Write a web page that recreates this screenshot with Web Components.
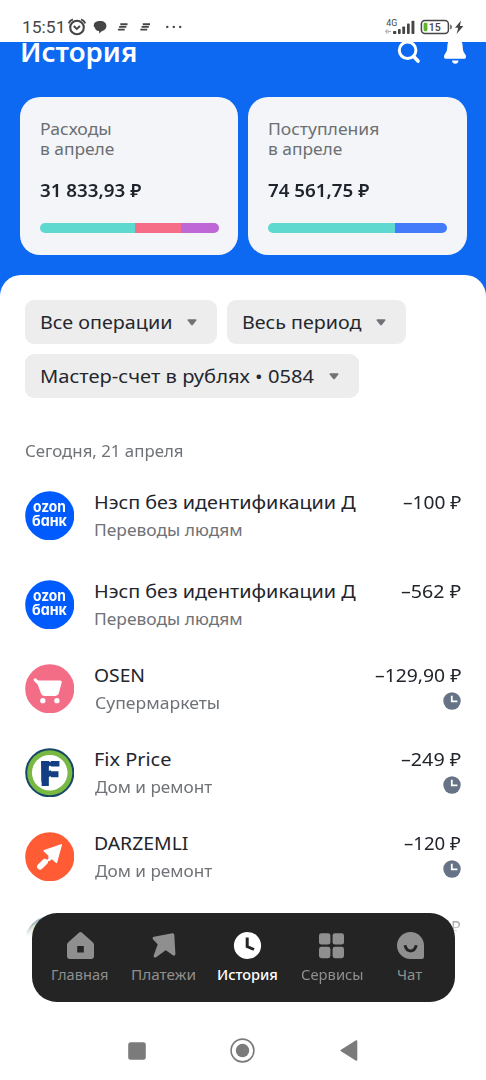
<!DOCTYPE html>
<html lang="ru">
<head>
<meta charset="utf-8">
<title>История</title>
<style>
html,body{margin:0;padding:0;background:#fff}
body{width:486px;height:1080px;overflow:hidden;font-family:"Noto Sans",sans-serif}
</style>
</head>
<body>
<bank-screen></bank-screen>
<script>
const make=(name,html,setup)=>customElements.define(name,class extends HTMLElement{
  connectedCallback(){
    if(this.shadowRoot)return;
    const t=document.createElement('template');
    t.innerHTML=typeof html==='function'?html(this):html;
    this.attachShadow({mode:'open'}).append(t.content.cloneNode(true));
    if(setup)setup(this);
  }
});

const icons={
  home:`<path fill="currentColor" fill-rule="evenodd" d="M11.6.9q1.9-1.8 3.8 0l10.3 9.3q1.3 1.2 1.3 2.6V24.600q0 2.400-2.400 2.400H2.400Q0 27 0 24.600V12.800q0-1.400 1.300-2.600zM10.200 14v6.600h6.600V14z"/>`,
  pay:`<path fill="currentColor" stroke="currentColor" stroke-width="3.200" stroke-linejoin="round" d="M22.700 2.800 4.200 6.300 9.500 12 5.200 24 15.700 16.300 23.800 22z"/>`,
  clock:`<circle cx="13.500" cy="13.500" r="13.600" fill="currentColor"/><path d="M13.200 5.500v9l6.800 3" fill="none" stroke="#242424" stroke-width="3"/>`,
  grid:`<g fill="currentColor"><rect x="1" y="1.200" width="11.400" height="11.400" rx="2.400"/><rect x="14.600" y="1.200" width="11.400" height="11.400" rx="2.400"/><rect x="1" y="14.800" width="11.400" height="11.400" rx="2.400"/><rect x="14.600" y="14.800" width="11.400" height="11.400" rx="2.400"/></g>`,
  chat:`<path fill="currentColor" d="M13.500 0A13.500 13.500 0 0 1 27 13.500V24.800Q27 27 24.800 27H13.500a13.500 13.500 0 0 1 0-27z"/><path d="M8 13.300q1.200 5.600 5.600 5.600t5.600-5.600" fill="none" stroke="#242424" stroke-width="3"/>`
};
const avatars={
  cart:`<circle cx="25" cy="25" r="24.800" fill="#f46d86"/><path d="M10.300 16l2.600 2.500" stroke="#fff" stroke-width="3.200" stroke-linecap="round"/><path fill="#fff" d="M11.300 16.600h23.800q2.500 0 1.900 2.400l-2.800 10.500q-.8 2.700-3.500 2.700H19.500q-2.600 0-3.300-2.500z"/><circle cx="18" cy="37" r="2.700" fill="#fff"/><circle cx="32.200" cy="37" r="2.700" fill="#fff"/>`,
  fix:`<circle cx="25" cy="25" r="24.800" fill="#164866"/><circle cx="25" cy="25" r="22.800" fill="#78b843"/><circle cx="25" cy="25" r="18" fill="#fff"/><path fill="#133e83" d="M16.200 13.200h7.900l1.200 1.200 1.200-1.200h8.300v5.600h-8.300l-1.200-1.200-1.200 1.200v4.700l1.200-1.200 1.200 1.200h7.300v6h-7.300l-1.200-1.200-1.200 1.200v9h-7.300v-4.300h-.4z"/>`,
  trowel:`<circle cx="25" cy="25" r="24.800" fill="#ff5c36"/><path fill="#fff" d="M36.300 12.300q1.400-.3 1 1.100l-4.800 17.400q-.4 1.200-1.400.3l-4-3.700-2.400 2.200-1.600-1.600 2.200-2.400-6.300-5.900q-.9-1 .3-1.400z"/><path d="M24.600 24.200v3.200l-3 2.700" stroke="#fff" stroke-width="2" fill="none"/><path d="M15.200 35l4.900-4.800" stroke="#fff" stroke-width="6" stroke-linecap="round"/>`,
  ozon:`<circle cx="25" cy="25" r="24.800" fill="#005bff"/>`
};

make('status-bar',`<style>
:host{display:flex;height:42px;box-sizing:border-box;padding:13px 22px 0 23px;color:#454545;font:16.500px/28px Roboto,sans-serif}
.t{width:44px;margin-top:1px}.i{width:120px}.s{margin-left:auto;width:80px}svg{display:block}
</style><div class="t"><fit-text w="39">15:51</fit-text></div>
<svg class="i" width="120" height="28" viewBox="67 13 120 28" fill="none" stroke="#454545">
<circle cx="77" cy="27.500" r="6.800" stroke-width="2.100"/><path d="M73.800 26l3 3 3.200-3" stroke-width="1.900"/><path d="M68.700 23.300q1-2.700 4.200-3.900M81.100 19.400q3 1 4.200 3.900" stroke-width="2"/>
<path d="M100.300 20.900c3.800 0 6.100 2 6.100 5 0 2.800-2 4.500-4.400 5l-2.600 2.700-.4-2.500c-2.500-.3-3.900-1.700-4-3.400-1.300-.6-1.700-2-1-3.100 0-2.500 2.600-3.700 6.300-3.700z" fill="#454545" stroke="none"/>
<g stroke-width="1.900"><path d="M120.300 24.200h7.200M119.100 26.900h7.200M117.900 29.600h6.800"/><path d="M142.800 24.200h7.200M141.600 26.900h7.200M140.400 29.600h6.800"/></g>
<g fill="#454545" stroke="none"><circle cx="167.300" cy="26.900" r="1.200"/><circle cx="173.800" cy="26.900" r="1.200"/><circle cx="180.200" cy="26.900" r="1.200"/></g></svg>
<svg class="s" width="80" height="28" viewBox="384 13 80 28">
<text x="386.300" y="26" font-size="8.600" fill="#454545" textLength="11" lengthAdjust="spacingAndGlyphs">4G</text>
<path d="M385 31.500h1.700m-.3-2v4M388 29.500v4m0-2h3" stroke="#a0a0a0" stroke-width=".8"/>
<g fill="#454545"><rect x="393" y="31" width="3.300" height="3" rx=".8"/><rect x="398" y="29" width="2.700" height="5" rx=".8"/><rect x="402.300" y="26.500" width="2.800" height="7.500" rx=".8"/><rect x="407" y="23.500" width="2.700" height="10.500" rx=".8"/><rect x="411.500" y="20.800" width="2.900" height="13.200" rx=".8"/></g>
<rect x="421.400" y="20.500" width="27" height="13" rx="3.500" fill="none" stroke="#454545" stroke-width="1.500"/><path d="M450.300 24.500q1.500.2 1.500 2.500t-1.500 2.500z" fill="#454545"/>
<rect x="423.600" y="22.700" width="3.800" height="8.600" rx="1.300" fill="#60b32b"/>
<text x="428.800" y="31" font-size="11" font-weight="500" fill="#454545" textLength="12" lengthAdjust="spacingAndGlyphs">15</text>
<path d="M461 20.500l-6 7.300h3.200l-1.600 6.200 6.800-8h-3.500z" fill="#454545"/></svg>`);

make('page-title',`<style>
:host{display:flex;height:55px;overflow:hidden;padding:0 19.500px 0 21.500px;box-sizing:border-box;color:#fff;justify-content:space-between;align-items:flex-start;width:486px}
h1{margin:-9.700px 0 0;font:600 26.500px/40px "Noto Sans",sans-serif}
svg{display:block;flex:none}
</style><h1><fit-text w="113.500"><slot></slot></fit-text></h1>
<svg width="70" height="24" viewBox="396 42 70 24"><circle cx="406.600" cy="50.300" r="8.300" fill="none" stroke="#fff" stroke-width="3"/><path d="M412.700 56.500l4.300 4.600" stroke="#fff" stroke-width="3.600" stroke-linecap="round"/>
<path d="M454 38c5 0 7.500 3 7.700 8.500.1 4.500.8 5.300 2.800 8.300.9 1.700.6 4-1.600 4h-17.800c-2.200 0-2.500-2.300-1.600-4 2-3 2.700-3.800 2.800-8.300.2-5.500 2.700-8.500 7.700-8.500z" fill="#fff"/><path d="M451 60.500h6.500q-.3 3.200-3.200 3.200t-3.300-3.200z" fill="#fff"/></svg>`);

make('summary-card',e=>`<style>
:host{display:block;box-sizing:border-box;height:158px;border-radius:20px;background:#f3f5f8;padding:22.500px 19.500px 0 20px;width:218.400px;color:#6c6f73}
.l{font-size:16.500px;line-height:19.500px;height:19.500px;padding-left:.5px}
.l:first-of-type{margin-top:-.5px;height:20px}
.a{font-size:18.700px;font-weight:600;line-height:24px;margin-top:19.500px;height:24px;color:#1f232b}
.b{display:flex;height:10px;border-radius:5px;overflow:hidden;margin-top:20.500px}
.b i{display:block}
</style><div class="l"><fit-text w="${e.getAttribute('lw')}">${e.getAttribute('label')}</fit-text></div><div class="l"><fit-text w="73.300">в апреле</fit-text></div>
<div class="a"><fit-text w="101.200">${e.getAttribute('amount')}</fit-text></div>
<div class="b">${e.getAttribute('bars').split(',').map(s=>{const[c,w]=s.split(' ');return`<i style="background:${c};flex:${w}"></i>`}).join('')}</div>`);

make('filter-chip',e=>`<style>
:host{display:flex;align-items:center;box-sizing:border-box;height:44px;border-radius:9px;background:#ededed;padding:0 20px 0 15.600px;justify-content:space-between;color:#24272e;font-size:18.800px;line-height:43px}
svg{display:block;margin-top:1px}
</style><fit-text w="${e.getAttribute('w')}"><slot></slot></fit-text><svg width="10" height="7" viewBox="0 0 10 7"><path d="M1.200.2h7.600q1.200.2.500 1.400L6 5.700q-1 1-2 0L.700 1.600Q0 .4 1.200.2z" fill="#6f7276"/></svg>`);

make('round-logo',e=>{const k=e.getAttribute('kind');return`<style>
:host{display:grid;width:49.500px;height:49.500px;flex:none}
svg,div{grid-area:1/1;display:block}
div{color:#fff;font:700 14.800px/13.700px Inter,sans-serif;font-feature-settings:"cv11";padding-top:10.300px;text-align:left}
p{margin:0;height:13.700px;padding-left:8.300px}p+p{padding-left:7.300px}
</style><svg viewBox="0 0 50 50" width="49.500" height="49.500" fill="none">${avatars[k]}</svg>${k==='ozon'?'<div><p><fit-text w="32.700">ozon</fit-text></p><p><fit-text w="34.500">банк</fit-text></p></div>':''}`});

make('operation-row',e=>{const g=n=>e.getAttribute(n);return`<style>
:host{display:flex;align-items:center;height:54px;padding-left:24.600px;padding-right:25px}
.m{margin-left:20.500px;flex:1;padding-top:1px}
.t,.a{height:27px;line-height:27px;font-size:18.800px;color:#22252c}
.s{height:27px;line-height:27px;font-size:16.500px;color:#6f7276}
.r{height:54px;display:flex;flex-direction:column;align-items:flex-end;padding-top:.5px;box-sizing:border-box}
svg{display:block;margin-top:2.800px}
</style><round-logo kind="${g('kind')}"></round-logo>
<div class="m">${g('name')?`<div class="t"><fit-text w="${g('nw')}">${g('name')}</fit-text></div><div class="s"><fit-text w="${g('cw')}">${g('cat')}</fit-text></div>`:''}</div>
<div class="r"><div class="a"><fit-text w="${g('aw')}">${g('amount')}</fit-text></div>${e.hasAttribute('pending')?'<svg width="18" height="18" viewBox="0 0 18 18"><circle cx="9" cy="9" r="8.700" fill="#667285"/><path d="M8.800 3.800v5.600h5.600" fill="none" stroke="#fff" stroke-width="1.800"/></svg>':''}</div>`});

make('nav-item',e=>`<style>
:host{display:flex;flex-direction:column;align-items:center;color:#8f8f8f;font-size:14.300px;line-height:20px;min-width:48px}
:host([active]){color:#fff;font-weight:500}
svg{display:block;margin-bottom:6px}
</style><svg width="27" height="27" viewBox="0 0 27 27" style="overflow:visible">${icons[e.getAttribute('icon')]}</svg><fit-text w="${e.getAttribute('w')}"><slot></slot></fit-text>`);

make('tab-bar',`<style>
:host{display:flex;box-sizing:border-box;width:423.500px;height:89px;border-radius:25px;background:#242424;padding:19px 0 0 20.500px;gap:23.400px;align-items:flex-start}
</style><nav-item icon="home" w="56.300">Главная</nav-item><nav-item icon="pay" w="63">Платежи</nav-item><nav-item icon="clock" w="59.500" active>История</nav-item><nav-item icon="grid" w="61.700">Сервисы</nav-item><nav-item icon="chat" w="24.500">Чат</nav-item>`);

make('system-keys',`<style>
:host{display:flex;align-items:center;justify-content:space-between;width:230px;height:26px}
svg{display:block}
</style><svg width="18" height="18"><rect x=".2" y=".2" width="17.600" height="17.600" rx="2.500" fill="#7b7b7b"/></svg>
<svg width="25" height="25"><circle cx="12.500" cy="12.500" r="11.400" fill="none" stroke="#7b7b7b" stroke-width="1.600"/><circle cx="12.500" cy="12.500" r="6.700" fill="#7b7b7b"/></svg>
<svg width="18" height="21" viewBox="0 0 18 21"><path d="M15.600.4q1.700-.8 1.700 1v18.200q0 1.800-1.700 1L1 11.300q-1.300-.8 0-1.600z" fill="#7b7b7b"/></svg>`);

make('bank-screen',`<style>
:host{display:block;position:relative;width:486px;height:1080px;overflow:hidden;background:#fff}
.top{background:#0d69f2;height:260px}
.cards{display:flex;gap:10px;padding-left:20px}
.sheet{background:#fff;border-radius:21px 21px 0 0;margin-top:-27px;padding-top:25px;height:780px;box-sizing:border-box}
.chips{display:flex;flex-wrap:wrap;gap:10.300px 10px;padding:0 25px}
.date{font-size:16.500px;line-height:24px;height:24px;margin:40.700px 0 25.500px 25.200px;color:#6f7276}
.list{display:grid;gap:30px}
.fade{opacity:.38;-webkit-mask-image:linear-gradient(#000 11px,transparent 23px);mask-image:linear-gradient(#000 11px,transparent 23px)}
tab-bar{position:absolute;left:31.500px;top:913px}
system-keys{position:absolute;left:127.500px;top:1037.500px}
</style>
<status-bar></status-bar>
<div class="top"><page-title>История</page-title>
<div class="cards"><summary-card label="Расходы" lw="70.200" amount="31 833,93 ₽" bars="#5dd9d0 95,#f66d87 46,#bf67d7 38.500"></summary-card>
<summary-card label="Поступления" lw="109.800" amount="74 561,75 ₽" bars="#5dd9d0 127,#437bfa 52.500"></summary-card></div></div>
<div class="sheet">
<div class="chips"><filter-chip w="130.700" style="width:192px">Все операции</filter-chip><filter-chip w="119" style="width:179.400px">Весь период</filter-chip><filter-chip w="273.300" style="width:334px">Мастер-счет в рублях • 0584</filter-chip></div>
<div class="date"><fit-text w="158">Сегодня, 21 апреля</fit-text></div>
<div class="list">
<operation-row kind="ozon" name="Нэсп без идентификации Д" nw="261" cat="Переводы людям" cw="147" amount="–100 ₽" aw="58.500"></operation-row>
<operation-row style="margin-top:5px" kind="ozon" name="Нэсп без идентификации Д" nw="261" cat="Переводы людям" cw="147" amount="–562 ₽" aw="60.200"></operation-row>
<operation-row kind="cart" name="OSEN" nw="48.700" cat="Супермаркеты" cw="124.600" amount="–129,90 ₽" aw="86.500" pending></operation-row>
<operation-row kind="fix" name="Fix Price" nw="75.800" cat="Дом и ремонт" cw="117.500" amount="–249 ₽" aw="60.300" pending></operation-row>
<operation-row kind="trowel" name="DARZEMLI" nw="93" cat="Дом и ремонт" cw="117.500" amount="–120 ₽" aw="57" pending></operation-row>
<operation-row class="fade" kind="fix" amount="₽" aw="9.800"></operation-row>
</div></div>
<tab-bar></tab-bar><system-keys></system-keys>`);

/* Sets a line so that its visible glyphs span exactly the width given in "w". */
make('fit-text',`<style>:host{display:inline-block;vertical-align:top;white-space:nowrap}span{display:inline-block;transform-origin:0 50%}</style><span><slot></slot></span>`,el=>{
  const nodes=el.shadowRoot.querySelector('slot').assignedNodes({flatten:true});
  const text=nodes.map(n=>n.textContent).join('').trim();
  const span=el.shadowRoot.querySelector('span'),cs=getComputedStyle(span);
  const c=document.createElement('canvas').getContext('2d');
  c.font=`${cs.fontWeight} ${cs.fontSize} ${cs.fontFamily}`;
  const m=c.measureText(text),w=parseFloat(el.getAttribute('w'));
  const k=w/(m.actualBoundingBoxLeft+m.actualBoundingBoxRight);
  el.style.width=w+'px';
  span.style.transform=`translateX(${m.actualBoundingBoxLeft*k}px) scaleX(${k})`;
});
</script>
</body>
</html>
